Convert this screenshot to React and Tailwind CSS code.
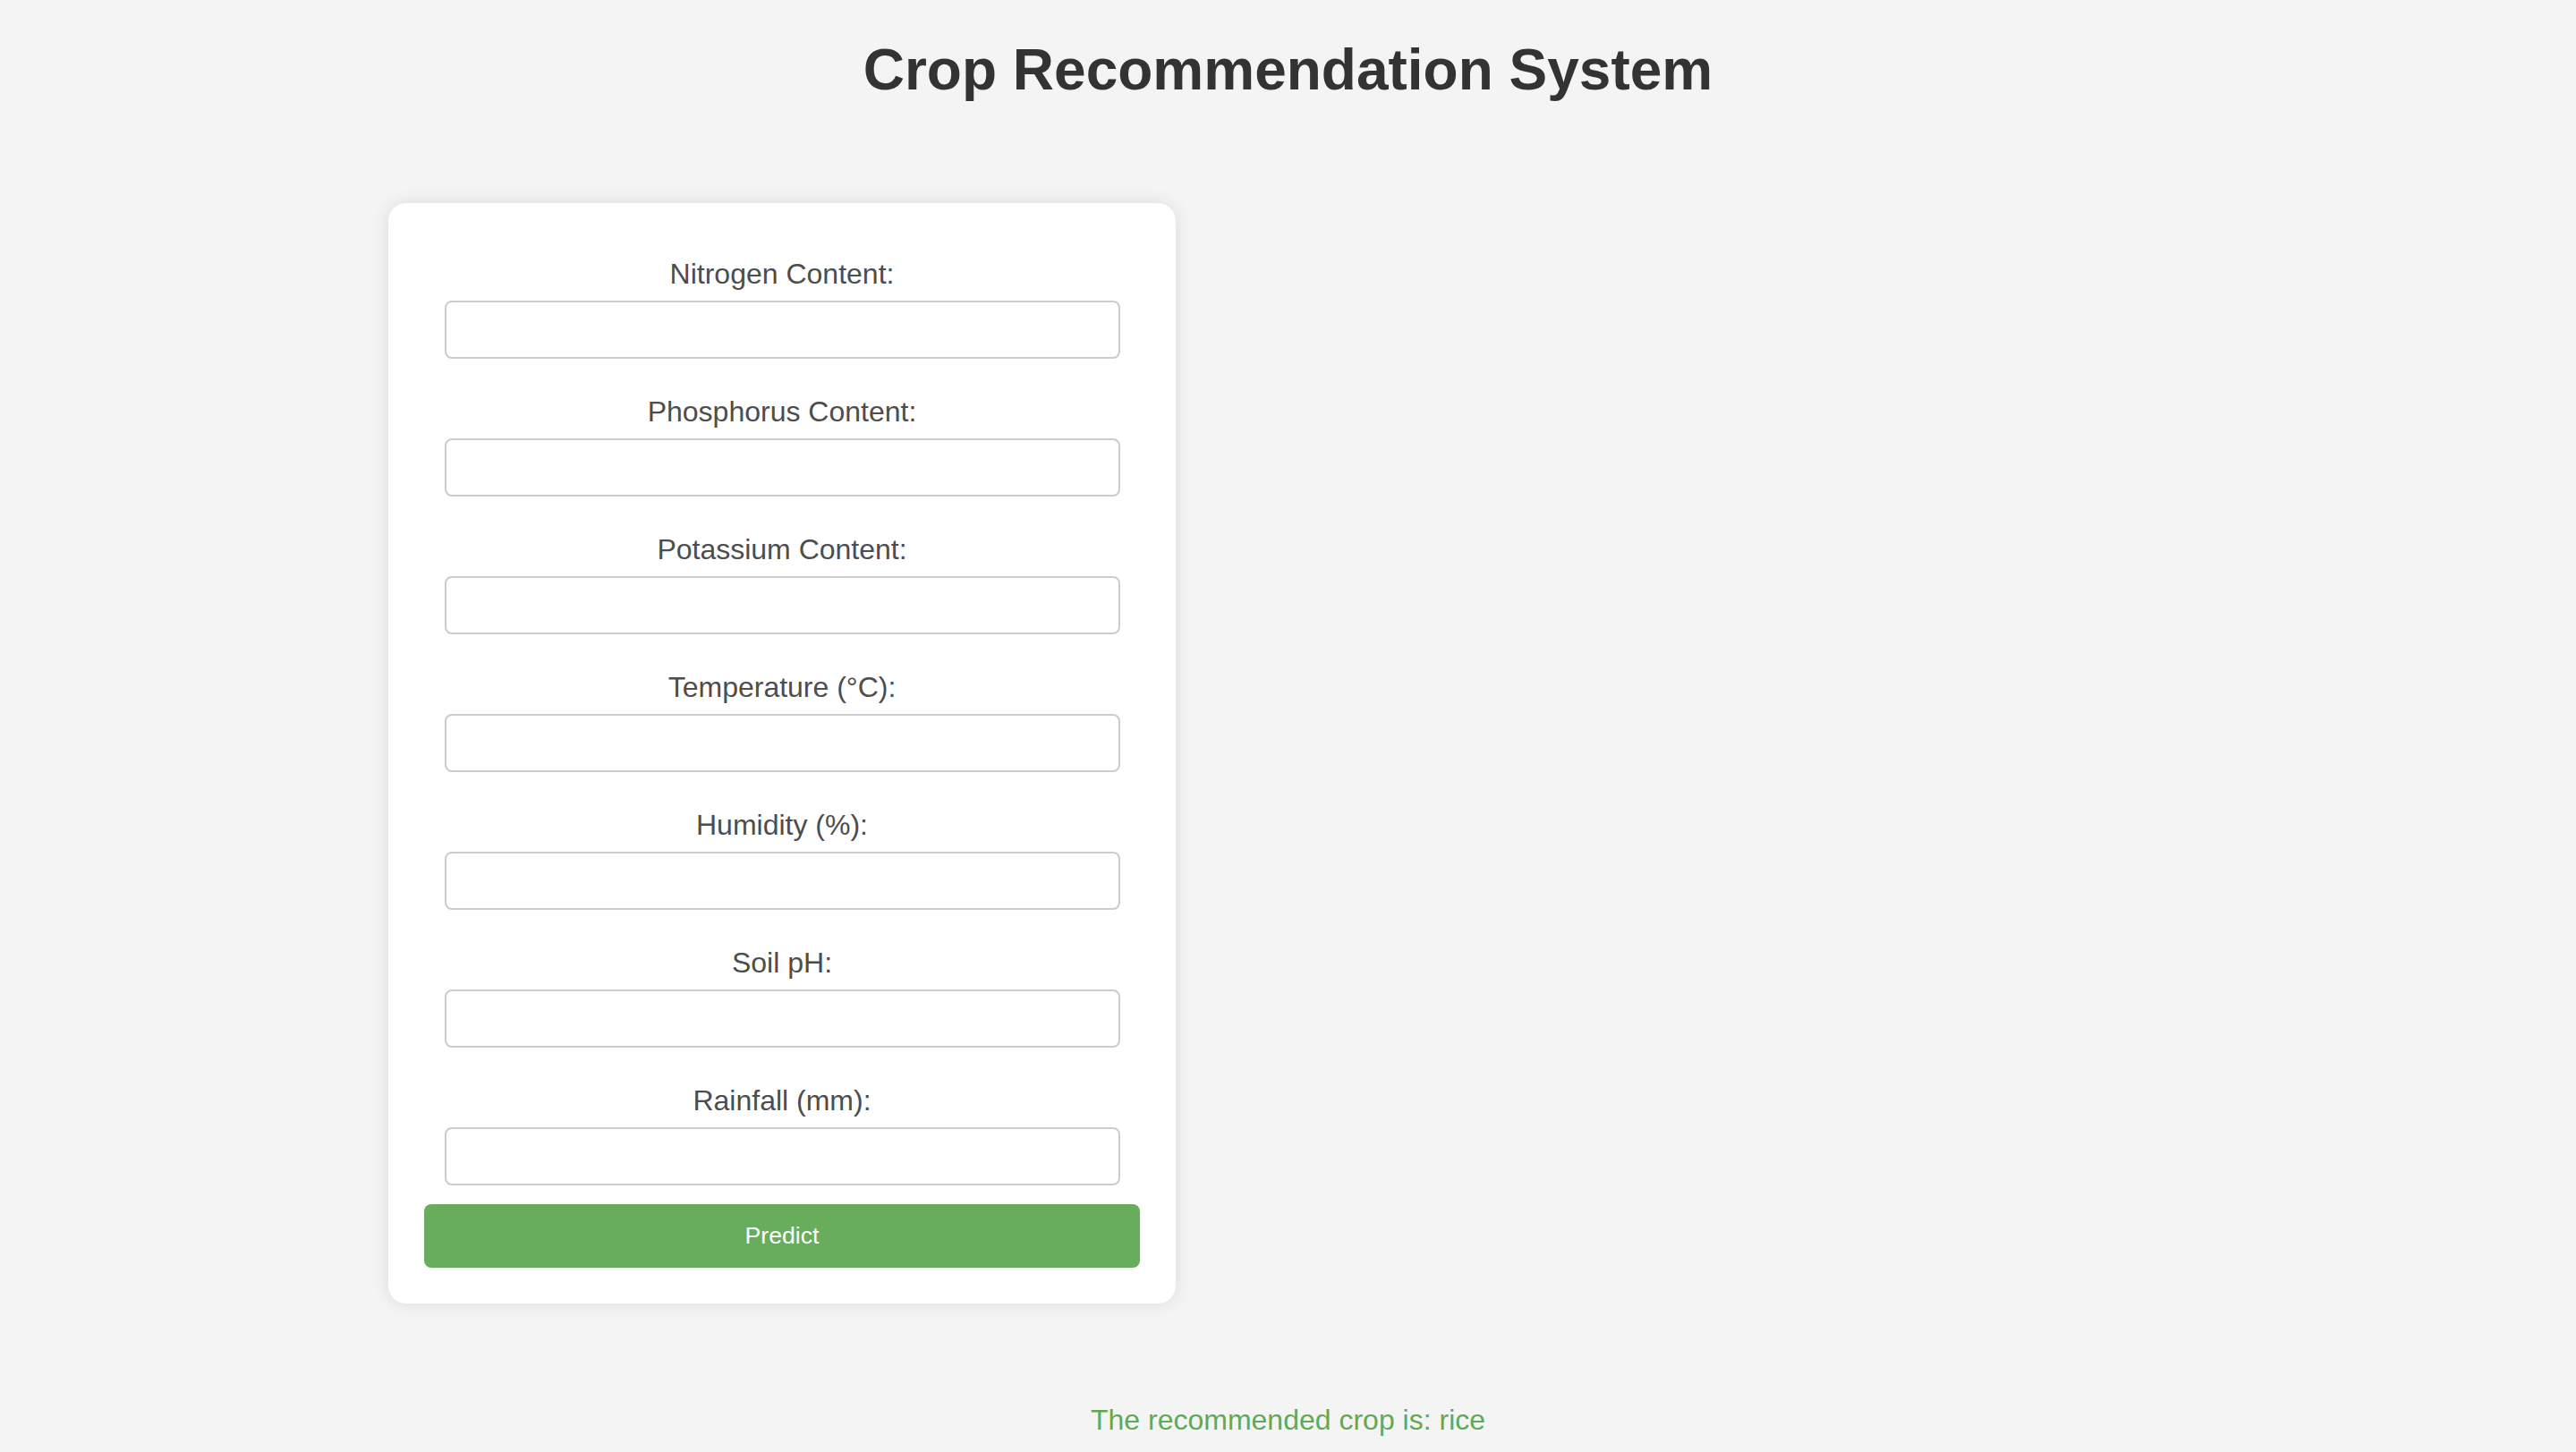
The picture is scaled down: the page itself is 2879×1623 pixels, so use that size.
import React, { useState } from "react";

const fields = [
  { name: "nitrogen", label: "Nitrogen Content:" },
  { name: "phosphorus", label: "Phosphorus Content:" },
  { name: "potassium", label: "Potassium Content:" },
  { name: "temperature", label: "Temperature (°C):" },
  { name: "humidity", label: "Humidity (%):" },
  { name: "ph", label: "Soil pH:" },
  { name: "rainfall", label: "Rainfall (mm):" },
];

export default function App() {
  const [formData, setFormData] = useState({});
  const [result] = useState("rice");

  const handleChange = (e) => {
    const { name, value } = e.target;
    setFormData((prev) => ({ ...prev, [name]: value }));
  };

  return (
    <div className="min-h-screen bg-[#f4f4f4] font-['Liberation_Sans',Arial,sans-serif] flex flex-col">
      <h1 className="mt-[41px] text-center text-[64px] leading-[74px] font-bold text-[#333333]">
        Crop Recommendation System
      </h1>

      <div className="ml-[434px] mt-[112px] w-[880px] bg-white rounded-[20px] shadow-[0_0_20px_rgba(0,0,0,0.1)] px-[40px] pt-[61px] pb-[40px]">
        <form
          onSubmit={(e) => e.preventDefault()}
          className="flex flex-col gap-[41px]"
        >
          {fields.map((f) => (
            <div key={f.name} className="flex flex-col items-center">
              <label
                htmlFor={f.name}
                className="text-[32px] leading-[37px] mb-[11px] text-[#4d4d4d]"
              >
                {f.label}
              </label>
              <input
                id={f.name}
                name={f.name}
                type="text"
                value={formData[f.name] || ""}
                onChange={handleChange}
                className="w-[755px] h-[65px] border-2 border-[#cccccc] rounded-[8px] bg-white px-4 text-[26px] outline-none"
              />
            </div>
          ))}
        </form>
        <button
          type="submit"
          className="mt-[21px] w-full h-[71px] rounded-[8px] bg-[#68ad5c] text-white text-[26.67px] leading-none"
        >
          Predict
        </button>
      </div>

      <p className="mt-[112px] text-center text-[32px] leading-[37px] text-[#5fab55]">
        The recommended crop is: {result}
      </p>
    </div>
  );
}
